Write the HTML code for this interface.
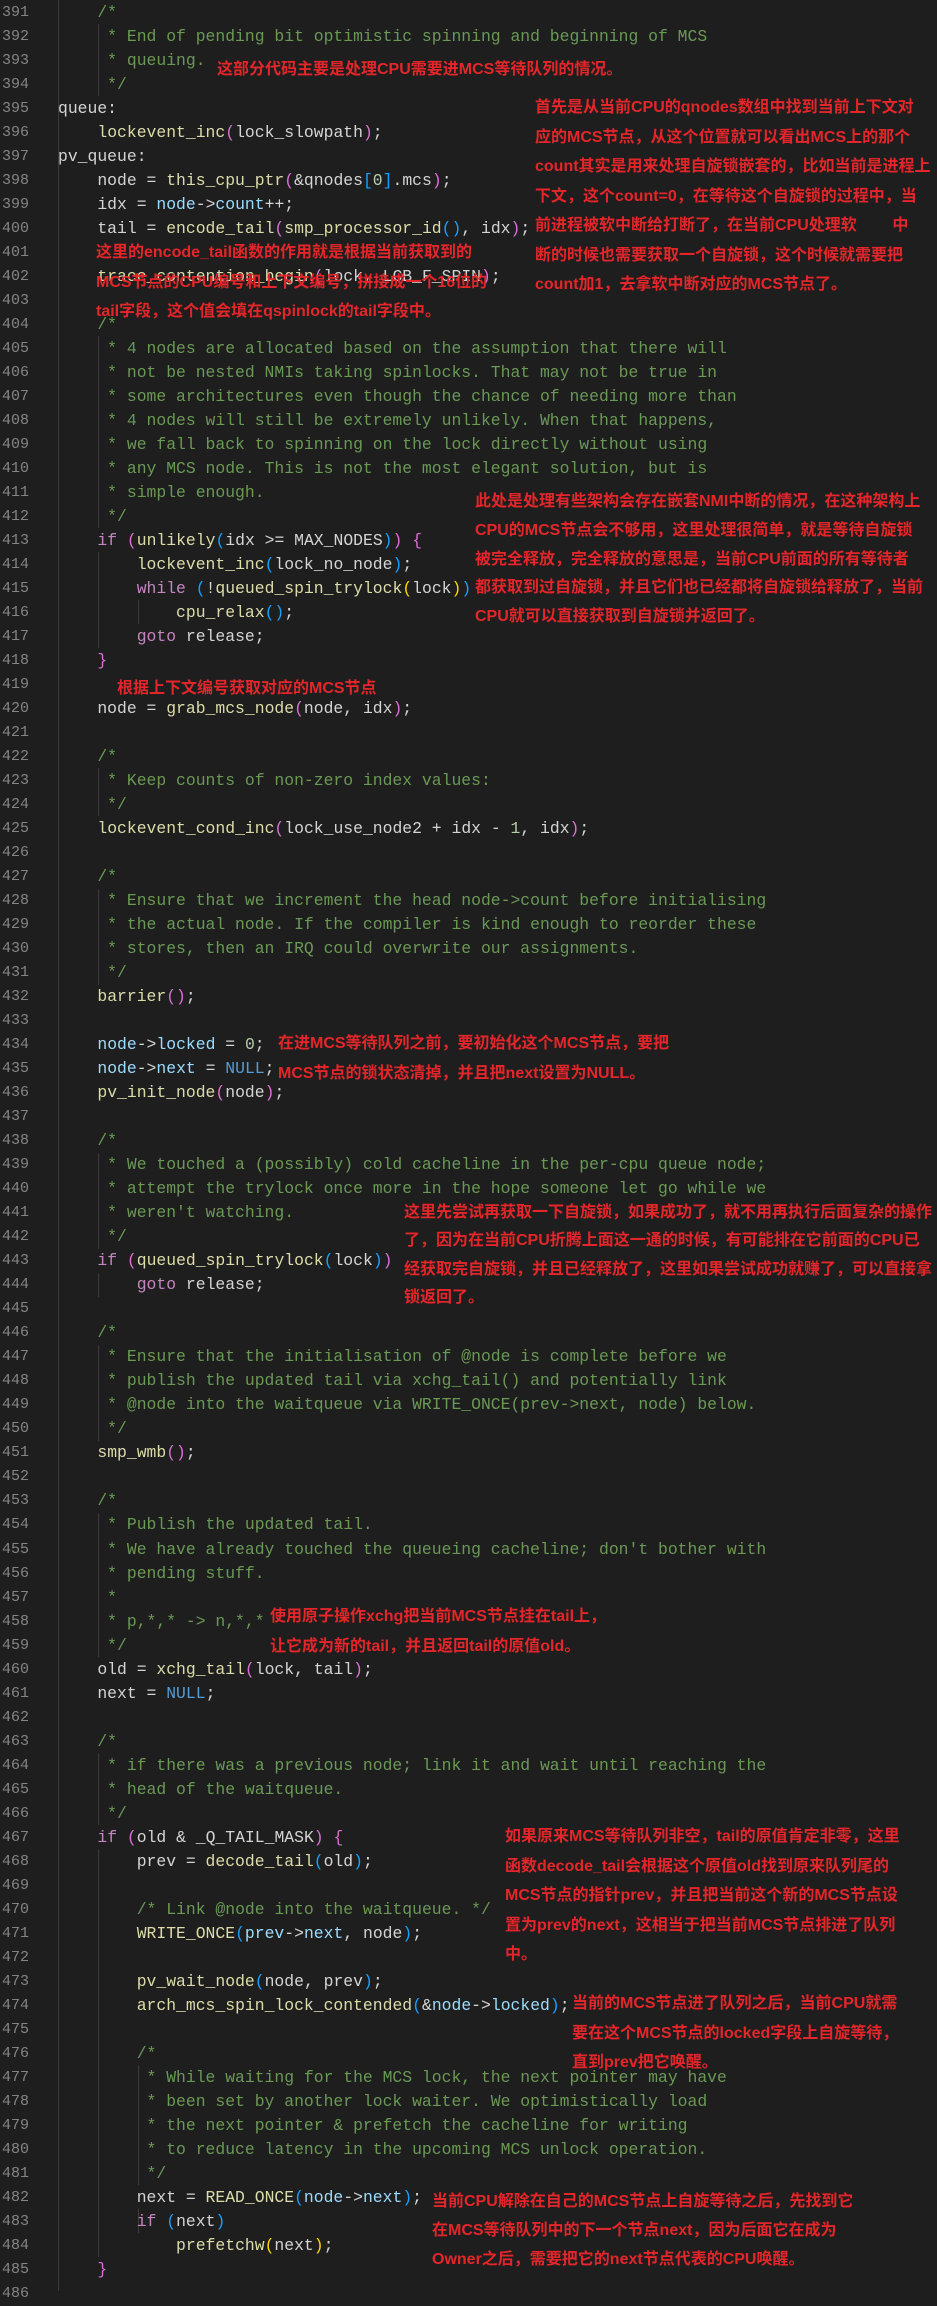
<!DOCTYPE html>
<html><head><meta charset="utf-8">
<style>
html,body{margin:0;padding:0;background:#1e1e1e;}
body{width:937px;height:2291px;position:relative;overflow:hidden;}
pre{margin:0;position:absolute;top:0.5px;font-family:"Liberation Mono",monospace;font-size:16.4px;line-height:24.02px;white-space:pre;}
#ln{left:2px;color:#858585;font-size:15px;}
#code{left:58px;color:#d4d4d4;}
.c{color:#6a9955}.f{color:#dcdcaa}.k{color:#c586c0}.n{color:#569cd6}.v{color:#9cdcfe}.o{color:#da70d6}.b{color:#179fff}.m{color:#b5cea8}.y{color:#ffd700}
.g{position:absolute;width:1px;background:#3c3c3c;}
.a{position:absolute;color:#e4262a;font-family:"Liberation Sans","Noto Sans CJK SC",sans-serif;font-weight:bold;font-size:16px;line-height:29.5px;white-space:pre;}
</style></head><body>
<div class="g" style="left:58px;top:0;height:2291px"></div>
<div class="g" style="left:98px;top:24px;height:72px"></div>
<div class="g" style="left:98px;top:336px;height:192px"></div>
<div class="g" style="left:98px;top:552px;height:96px"></div>
<div class="g" style="left:98px;top:768px;height:48px"></div>
<div class="g" style="left:98px;top:889px;height:96px"></div>
<div class="g" style="left:98px;top:1153px;height:96px"></div>
<div class="g" style="left:98px;top:1273px;height:24px"></div>
<div class="g" style="left:98px;top:1345px;height:96px"></div>
<div class="g" style="left:98px;top:1513px;height:144px"></div>
<div class="g" style="left:98px;top:1753px;height:72px"></div>
<div class="g" style="left:98px;top:1849px;height:408px"></div>
<div class="g" style="left:138px;top:600px;height:24px"></div>
<div class="g" style="left:138px;top:2065px;height:120px"></div>
<div class="g" style="left:138px;top:2209px;height:24px"></div>
<pre id="ln">391
392
393
394
395
396
397
398
399
400
401
402
403
404
405
406
407
408
409
410
411
412
413
414
415
416
417
418
419
420
421
422
423
424
425
426
427
428
429
430
431
432
433
434
435
436
437
438
439
440
441
442
443
444
445
446
447
448
449
450
451
452
453
454
455
456
457
458
459
460
461
462
463
464
465
466
467
468
469
470
471
472
473
474
475
476
477
478
479
480
481
482
483
484
485
486</pre>
<pre id="code"><span class="c">    /*
     * End of pending bit optimistic spinning and beginning of MCS
     * queuing.
     */</span>
queue:
    <span class="f">lockevent_inc</span><span class="o">(</span>lock_slowpath<span class="o">)</span>;
pv_queue:
    node = <span class="f">this_cpu_ptr</span><span class="o">(</span>&amp;qnodes<span class="b">[</span><span class="m">0</span><span class="b">]</span>.mcs<span class="o">)</span>;
    idx = <span class="v">node</span>-&gt;<span class="v">count</span>++;
    tail = <span class="f">encode_tail</span><span class="o">(</span><span class="f">smp_processor_id</span><span class="b">()</span>, idx<span class="o">)</span>;

    <span class="f">trace_contention_begin</span><span class="o">(</span>lock, LCB_F_SPIN<span class="o">)</span>;

<span class="c">    /*
     * 4 nodes are allocated based on the assumption that there will
     * not be nested NMIs taking spinlocks. That may not be true in
     * some architectures even though the chance of needing more than
     * 4 nodes will still be extremely unlikely. When that happens,
     * we fall back to spinning on the lock directly without using
     * any MCS node. This is not the most elegant solution, but is
     * simple enough.
     */</span>
    <span class="k">if</span> <span class="o">(</span><span class="f">unlikely</span><span class="b">(</span>idx &gt;= MAX_NODES<span class="b">)</span><span class="o">)</span> <span class="o">{</span>
        <span class="f">lockevent_inc</span><span class="b">(</span>lock_no_node<span class="b">)</span>;
        <span class="k">while</span> <span class="b">(</span>!<span class="f">queued_spin_trylock</span><span class="y">(</span>lock<span class="y">)</span><span class="b">)</span>
            <span class="f">cpu_relax</span><span class="b">()</span>;
        <span class="k">goto</span> release;
    <span class="o">}</span>

    node = <span class="f">grab_mcs_node</span><span class="o">(</span>node, idx<span class="o">)</span>;

<span class="c">    /*
     * Keep counts of non-zero index values:
     */</span>
    <span class="f">lockevent_cond_inc</span><span class="o">(</span>lock_use_node2 + idx - <span class="m">1</span>, idx<span class="o">)</span>;

<span class="c">    /*
     * Ensure that we increment the head node-&gt;count before initialising
     * the actual node. If the compiler is kind enough to reorder these
     * stores, then an IRQ could overwrite our assignments.
     */</span>
    <span class="f">barrier</span><span class="o">()</span>;

    <span class="v">node</span>-&gt;<span class="v">locked</span> = <span class="m">0</span>;
    <span class="v">node</span>-&gt;<span class="v">next</span> = <span class="n">NULL</span>;
    <span class="f">pv_init_node</span><span class="o">(</span>node<span class="o">)</span>;

<span class="c">    /*
     * We touched a (possibly) cold cacheline in the per-cpu queue node;
     * attempt the trylock once more in the hope someone let go while we
     * weren't watching.
     */</span>
    <span class="k">if</span> <span class="o">(</span><span class="f">queued_spin_trylock</span><span class="b">(</span>lock<span class="b">)</span><span class="o">)</span>
        <span class="k">goto</span> release;

<span class="c">    /*
     * Ensure that the initialisation of @node is complete before we
     * publish the updated tail via xchg_tail() and potentially link
     * @node into the waitqueue via WRITE_ONCE(prev-&gt;next, node) below.
     */</span>
    <span class="f">smp_wmb</span><span class="o">()</span>;

<span class="c">    /*
     * Publish the updated tail.
     * We have already touched the queueing cacheline; don't bother with
     * pending stuff.
     *
     * p,*,* -&gt; n,*,*
     */</span>
    old = <span class="f">xchg_tail</span><span class="o">(</span>lock, tail<span class="o">)</span>;
    next = <span class="n">NULL</span>;

<span class="c">    /*
     * if there was a previous node; link it and wait until reaching the
     * head of the waitqueue.
     */</span>
    <span class="k">if</span> <span class="o">(</span>old &amp; _Q_TAIL_MASK<span class="o">)</span> <span class="o">{</span>
        prev = <span class="f">decode_tail</span><span class="b">(</span>old<span class="b">)</span>;

        <span class="c">/* Link @node into the waitqueue. */</span>
        <span class="f">WRITE_ONCE</span><span class="b">(</span><span class="v">prev</span>-&gt;<span class="v">next</span>, node<span class="b">)</span>;

        <span class="f">pv_wait_node</span><span class="b">(</span>node, prev<span class="b">)</span>;
        <span class="f">arch_mcs_spin_lock_contended</span><span class="b">(</span>&amp;<span class="v">node</span>-&gt;<span class="v">locked</span><span class="b">)</span>;

<span class="c">        /*
         * While waiting for the MCS lock, the next pointer may have
         * been set by another lock waiter. We optimistically load
         * the next pointer &amp; prefetch the cacheline for writing
         * to reduce latency in the upcoming MCS unlock operation.
         */</span>
        next = <span class="f">READ_ONCE</span><span class="b">(</span><span class="v">node</span>-&gt;<span class="v">next</span><span class="b">)</span>;
        <span class="k">if</span> <span class="b">(</span>next<span class="b">)</span>
            <span class="f">prefetchw</span><span class="y">(</span>next<span class="y">)</span>;
    <span class="o">}</span>
</pre>

<div class="a" style="left:217px;top:55px">这部分代码主要是处理CPU需要进MCS等待队列的情况。</div>
<div class="a" style="left:535px;top:93px">首先是从当前CPU的qnodes数组中找到当前上下文对
应的MCS节点，从这个位置就可以看出MCS上的那个
count其实是用来处理自旋锁嵌套的，比如当前是进程上
下文，这个count=0，在等待这个自旋锁的过程中，当
前进程被软中断给打断了，在当前CPU处理软        中
断的时候也需要获取一个自旋锁，这个时候就需要把
count加1，去拿软中断对应的MCS节点了。</div>
<div class="a" style="left:96px;top:238px">这里的encode_tail函数的作用就是根据当前获取到的
MCS节点的CPU编号和上下文编号，拼接成一个16位的
tail字段，这个值会填在qspinlock的tail字段中。</div>
<div class="a" style="left:475px;top:488px;line-height:28.8px">此处是处理有些架构会存在嵌套NMI中断的情况，在这种架构上
CPU的MCS节点会不够用，这里处理很简单，就是等待自旋锁
被完全释放，完全释放的意思是，当前CPU前面的所有等待者
都获取到过自旋锁，并且它们也已经都将自旋锁给释放了，当前
CPU就可以直接获取到自旋锁并返回了。</div>
<div class="a" style="left:117px;top:674px">根据上下文编号获取对应的MCS节点</div>
<div class="a" style="left:278px;top:1029px;line-height:30px">在进MCS等待队列之前，要初始化这个MCS节点，要把
MCS节点的锁状态清掉，并且把next设置为NULL。</div>
<div class="a" style="left:404px;top:1199px;line-height:28.3px">这里先尝试再获取一下自旋锁，如果成功了，就不用再执行后面复杂的操作
了，因为在当前CPU折腾上面这一通的时候，有可能排在它前面的CPU已
经获取完自旋锁，并且已经释放了，这里如果尝试成功就赚了，可以直接拿
锁返回了。</div>
<div class="a" style="left:270px;top:1602px;line-height:30px">使用原子操作xchg把当前MCS节点挂在tail上，
让它成为新的tail，并且返回tail的原值old。</div>
<div class="a" style="left:505px;top:1822px;line-height:29.5px">如果原来MCS等待队列非空，tail的原值肯定非零，这里
函数decode_tail会根据这个原值old找到原来队列尾的
MCS节点的指针prev，并且把当前这个新的MCS节点设
置为prev的next，这相当于把当前MCS节点排进了队列
中。</div>
<div class="a" style="left:572px;top:1989px;line-height:29.5px">当前的MCS节点进了队列之后，当前CPU就需
要在这个MCS节点的locked字段上自旋等待，
直到prev把它唤醒。</div>
<div class="a" style="left:432px;top:2187px;line-height:29px">当前CPU解除在自己的MCS节点上自旋等待之后，先找到它
在MCS等待队列中的下一个节点next，因为后面它在成为
Owner之后，需要把它的next节点代表的CPU唤醒。</div>
</body></html>
